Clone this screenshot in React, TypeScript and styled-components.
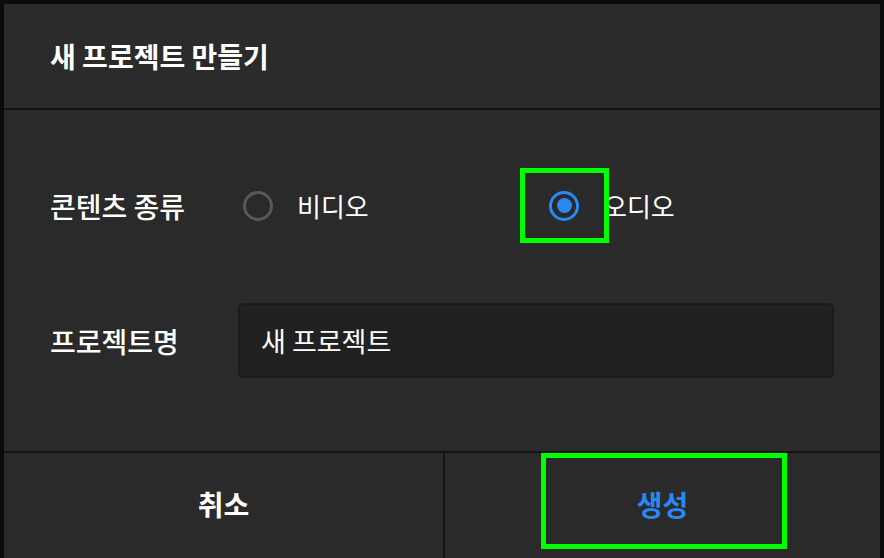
import React from "react";
import styled, { createGlobalStyle } from "styled-components";

const Global = createGlobalStyle`
  html, body, #root { margin: 0; padding: 0; height: 100%; overflow: hidden; }
  body {
    background: #0b0b0b;
    font-family: "Noto Sans CJK KR", "Noto Sans", sans-serif;
    color: #ffffff;
  }
`;

const Page = styled.div`
  height: 100%;
  box-sizing: border-box;
  padding: 4px 4px 0 4px;
  display: flex;
`;

const Dialog = styled.div`
  flex: 1;
  min-width: 0;
  display: flex;
  flex-direction: column;
  background: #2a2a2a;
`;

const Header = styled.div`
  height: 104px;
  flex-shrink: 0;
  display: flex;
  align-items: center;
  padding: 0 46px;
  background: #2b2b2b;
  border-bottom: 2px solid #121212;
  font-size: 28px;
  font-weight: 700;
`;

const Body = styled.div`
  flex-shrink: 0;
  height: 341px;
  box-sizing: border-box;
  padding: 58px 46px 0 46px;
  display: flex;
  flex-direction: column;
  gap: 60px;
`;

const Row = styled.div`
  height: 75px;
  display: flex;
  align-items: center;
`;

const Label = styled.div`
  width: 188px;
  flex-shrink: 0;
  font-size: 28px;
  font-weight: 500;
`;

const Options = styled.div`
  display: grid;
  grid-template-columns: 306px auto;
  height: 100%;
  align-items: center;
  padding-left: 5px;
`;

const Option = styled.label`
  display: flex;
  align-items: center;
  gap: 24px;
  font-size: 26px;
  font-weight: 400;
`;

const RadioWrap = styled.span<{ $focused?: boolean }>`
  position: relative;
  display: inline-flex;
  &::after {
    content: "";
    display: ${(p) => (p.$focused ? "block" : "none")};
    position: absolute;
    left: -29px;
    top: -23px;
    width: 79px;
    height: 65px;
    border: 5px solid #00ff00;
  }
`;

const Radio = styled.span<{ $checked?: boolean }>`
  width: 30px;
  height: 30px;
  box-sizing: border-box;
  border-radius: 50%;
  border: 3px solid ${(p) => (p.$checked ? "#2889f5" : "#585858")};
  display: flex;
  align-items: center;
  justify-content: center;
  &::before {
    content: "";
    display: ${(p) => (p.$checked ? "block" : "none")};
    width: 15px;
    height: 15px;
    border-radius: 50%;
    background: #2889f5;
  }
`;

const Input = styled.div`
  flex: 1;
  height: 75px;
  box-sizing: border-box;
  background: #212121;
  border: 2px solid #1b1b1b;
  border-radius: 6px;
  display: flex;
  align-items: center;
  padding-left: 21px;
  font-size: 27px;
  font-weight: 400;
`;

const Footer = styled.div`
  flex: 1;
  display: grid;
  grid-template-columns: 439px 1fr;
  border-top: 2px solid #141414;
`;

const FooterButton = styled.div<{ $primary?: boolean; $focused?: boolean }>`
  position: relative;
  display: flex;
  align-items: center;
  justify-content: center;
  font-size: 28px;
  font-weight: 700;
  color: ${(p) => (p.$primary ? "#2889f5" : "#ffffff")};
  & + & {
    border-left: 2px solid #161616;
  }
  &::after {
    content: "";
    display: ${(p) => (p.$focused ? "block" : "none")};
    position: absolute;
    left: 96px;
    top: 0px;
    width: 236px;
    height: 86px;
    border: 5px solid #00ff00;
  }
`;

const ButtonText = styled.span`
  position: relative;
  top: -2px;
`;

export default function App() {
  return (
    <>
      <Global />
      <Page>
        <Dialog>
          <Header>새 프로젝트 만들기</Header>
          <Body>
            <Row>
              <Label>콘텐츠 종류</Label>
              <Options>
                <Option>
                  <RadioWrap>
                    <Radio />
                  </RadioWrap>
                  비디오
                </Option>
                <Option>
                  <RadioWrap $focused>
                    <Radio $checked />
                  </RadioWrap>
                  오디오
                </Option>
              </Options>
            </Row>
            <Row>
              <Label>프로젝트명</Label>
              <Input>새 프로젝트</Input>
            </Row>
          </Body>
          <Footer>
            <FooterButton>
              <ButtonText>취소</ButtonText>
            </FooterButton>
            <FooterButton $primary $focused>
              <ButtonText>생성</ButtonText>
            </FooterButton>
          </Footer>
        </Dialog>
      </Page>
    </>
  );
}
